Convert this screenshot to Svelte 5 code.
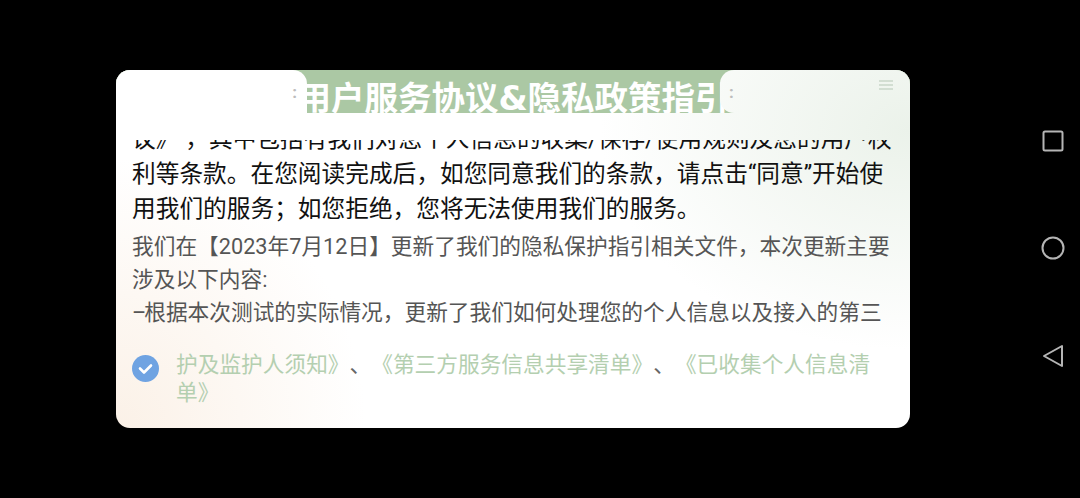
<script lang="ts">
  // the scroller starts part-way through the policy text, so the first line is cut by the header
  const lead = [
    "议》 ，其中包括有我们对您个人信息的收集/保存/使用规则及您的用户权",
    "利等条款。在您阅读完成后，如您同意我们的条款，请点击“同意”开始使",
    "用我们的服务；如您拒绝，您将无法使用我们的服务。"
  ];
  const notes = [
    "我们在【2023年7月12日】更新了我们的隐私保护指引相关文件，本次更新主要",
    "涉及以下内容:",
    "–根据本次测试的实际情况，更新了我们如何处理您的个人信息以及接入的第三"
  ];
</script>

<div class="screen">
  <div class="card">
    <header>
      <h1>用户服务协议<span class="amp">&</span>隐私政策指引</h1>
      <div class="mask left"><span class="dots">:</span></div>
      <div class="mask right">
        <span class="dots">:</span>
        <svg class="menu" width="16" height="12" viewBox="0 0 16 12" aria-hidden="true">
          <path d="M1 2h14M1 6h14M1 10h14" stroke="#c9d6c9" stroke-width="1.3" fill="none" />
        </svg>
      </div>
    </header>

    <div class="scroll">
      <div class="scroll-inner">
        <div class="lead">
          {#each lead as line}
            <p>{line}</p>
          {/each}
        </div>
        {#each notes as line}
          <p class="note">{line}</p>
        {/each}
      </div>
    </div>

    <div class="agree">
      <svg class="check" width="27" height="27" viewBox="0 0 27 27" aria-hidden="true">
        <circle cx="13.5" cy="13.5" r="13.5" fill="#6fa3e2" />
        <path d="M8 13.5l4 4 7-7" stroke="#fff" stroke-width="2.6" fill="none" stroke-linecap="round" stroke-linejoin="round" />
      </svg>
      <p>护及监护人须知》<span class="sep">、</span>《第三方服务信息共享清单》<span class="sep">、</span>《已收集个人信息清单》</p>
    </div>
  </div>

  <nav>
    <svg width="22" height="22" viewBox="0 0 22 22" aria-hidden="true">
      <rect x="1.5" y="1.5" width="19" height="19" rx="1.5" fill="none" stroke="#b5b5b5" stroke-width="2" />
    </svg>
    <svg width="24" height="24" viewBox="0 0 24 24" aria-hidden="true">
      <circle cx="12" cy="12" r="10.5" fill="none" stroke="#b5b5b5" stroke-width="2" />
    </svg>
    <svg width="22" height="24" viewBox="0 0 22 24" aria-hidden="true">
      <path d="M20 2v20L2 12z" fill="none" stroke="#b5b5b5" stroke-width="2" stroke-linejoin="round" />
    </svg>
  </nav>
</div>

<style>
  :global(body) { margin: 0; background: #000; }

  .screen {
    width: 1080px;
    height: 498px;
    background: #000;
    display: flex;
    padding: 70px 0 0 116px;
    box-sizing: border-box;
    overflow: hidden;
    font-family: Roboto, "Noto Sans CJK SC", sans-serif;
    text-spacing-trim: space-all;
  }

  /* card and header masks share one fixed gradient so the masks don't show an edge */
  .card, .mask {
    background-color: #fff;
    background-image:
      radial-gradient(ellipse 310px 220px at 910px 130px, #ebf2ea 0%, rgba(255, 255, 255, 0) 100%),
      radial-gradient(ellipse 250px 270px at 116px 428px, #fbf1e7 0%, rgba(255, 255, 255, 0) 100%);
    background-attachment: fixed;
  }

  .card {
    width: 794px;
    height: 358px;
    border-radius: 14px;
    overflow: hidden;
    display: flex;
    flex-direction: column;
  }

  header {
    position: relative;
    height: 43px;
    background: #abc8a4;
    overflow: hidden;
    flex: none;
  }
  h1 {
    margin: 0;
    text-align: center;
    font-size: 33.5px;
    line-height: 57px;
    font-weight: 700;
    color: #fff;
    white-space: nowrap;
  }
  .amp { font-family: "DejaVu Sans", sans-serif; }
  .mask {
    position: absolute;
    top: 0;
    bottom: 0;
  }
  .mask.left { left: 0; width: 191px; border-top-right-radius: 14px; }
  .mask.right {
    right: 0;
    width: 190px;
    border-radius: 14px 0 0 14px;
  }
  .dots {
    position: absolute;
    top: 12px;
    font-size: 17px;
    line-height: 20px;
    font-weight: 700;
    color: #bdbdbd;
  }
  .mask.left .dots { right: 10px; }
  .mask.right .dots { left: 9px; }
  .menu { position: absolute; top: 9px; right: 16px; }

  .scroll {
    height: 194px;
    margin: 27px 16px 0;
    overflow: hidden;
    flex: none;
  }
  .scroll-inner { margin-top: -18px; }
  p { margin: 0; white-space: nowrap; }
  .lead {
    font-size: 23.7px;
    line-height: 35px;
    color: #111;
    margin-bottom: 3px;
  }
  .note {
    font-size: 21.7px;
    line-height: 33px;
    color: #555;
  }
  .note:last-child::first-letter { letter-spacing: -2px; }

  .agree {
    display: flex;
    align-items: flex-start;
    gap: 17px;
    padding: 0 20px 0 16px;
    margin-top: 10px;
  }
  .check { flex: none; margin-top: 11px; }
  .agree p {
    font-size: 21.7px;
    line-height: 27.5px;
    color: #b4cfb0;
    white-space: normal;
    padding-top: 7px;
  }
  .sep { color: #666; }

  nav {
    margin: 60px 0 0 131px;
    height: 238px;
    display: flex;
    flex-direction: column;
    justify-content: space-between;
    align-items: center;
  }
</style>
